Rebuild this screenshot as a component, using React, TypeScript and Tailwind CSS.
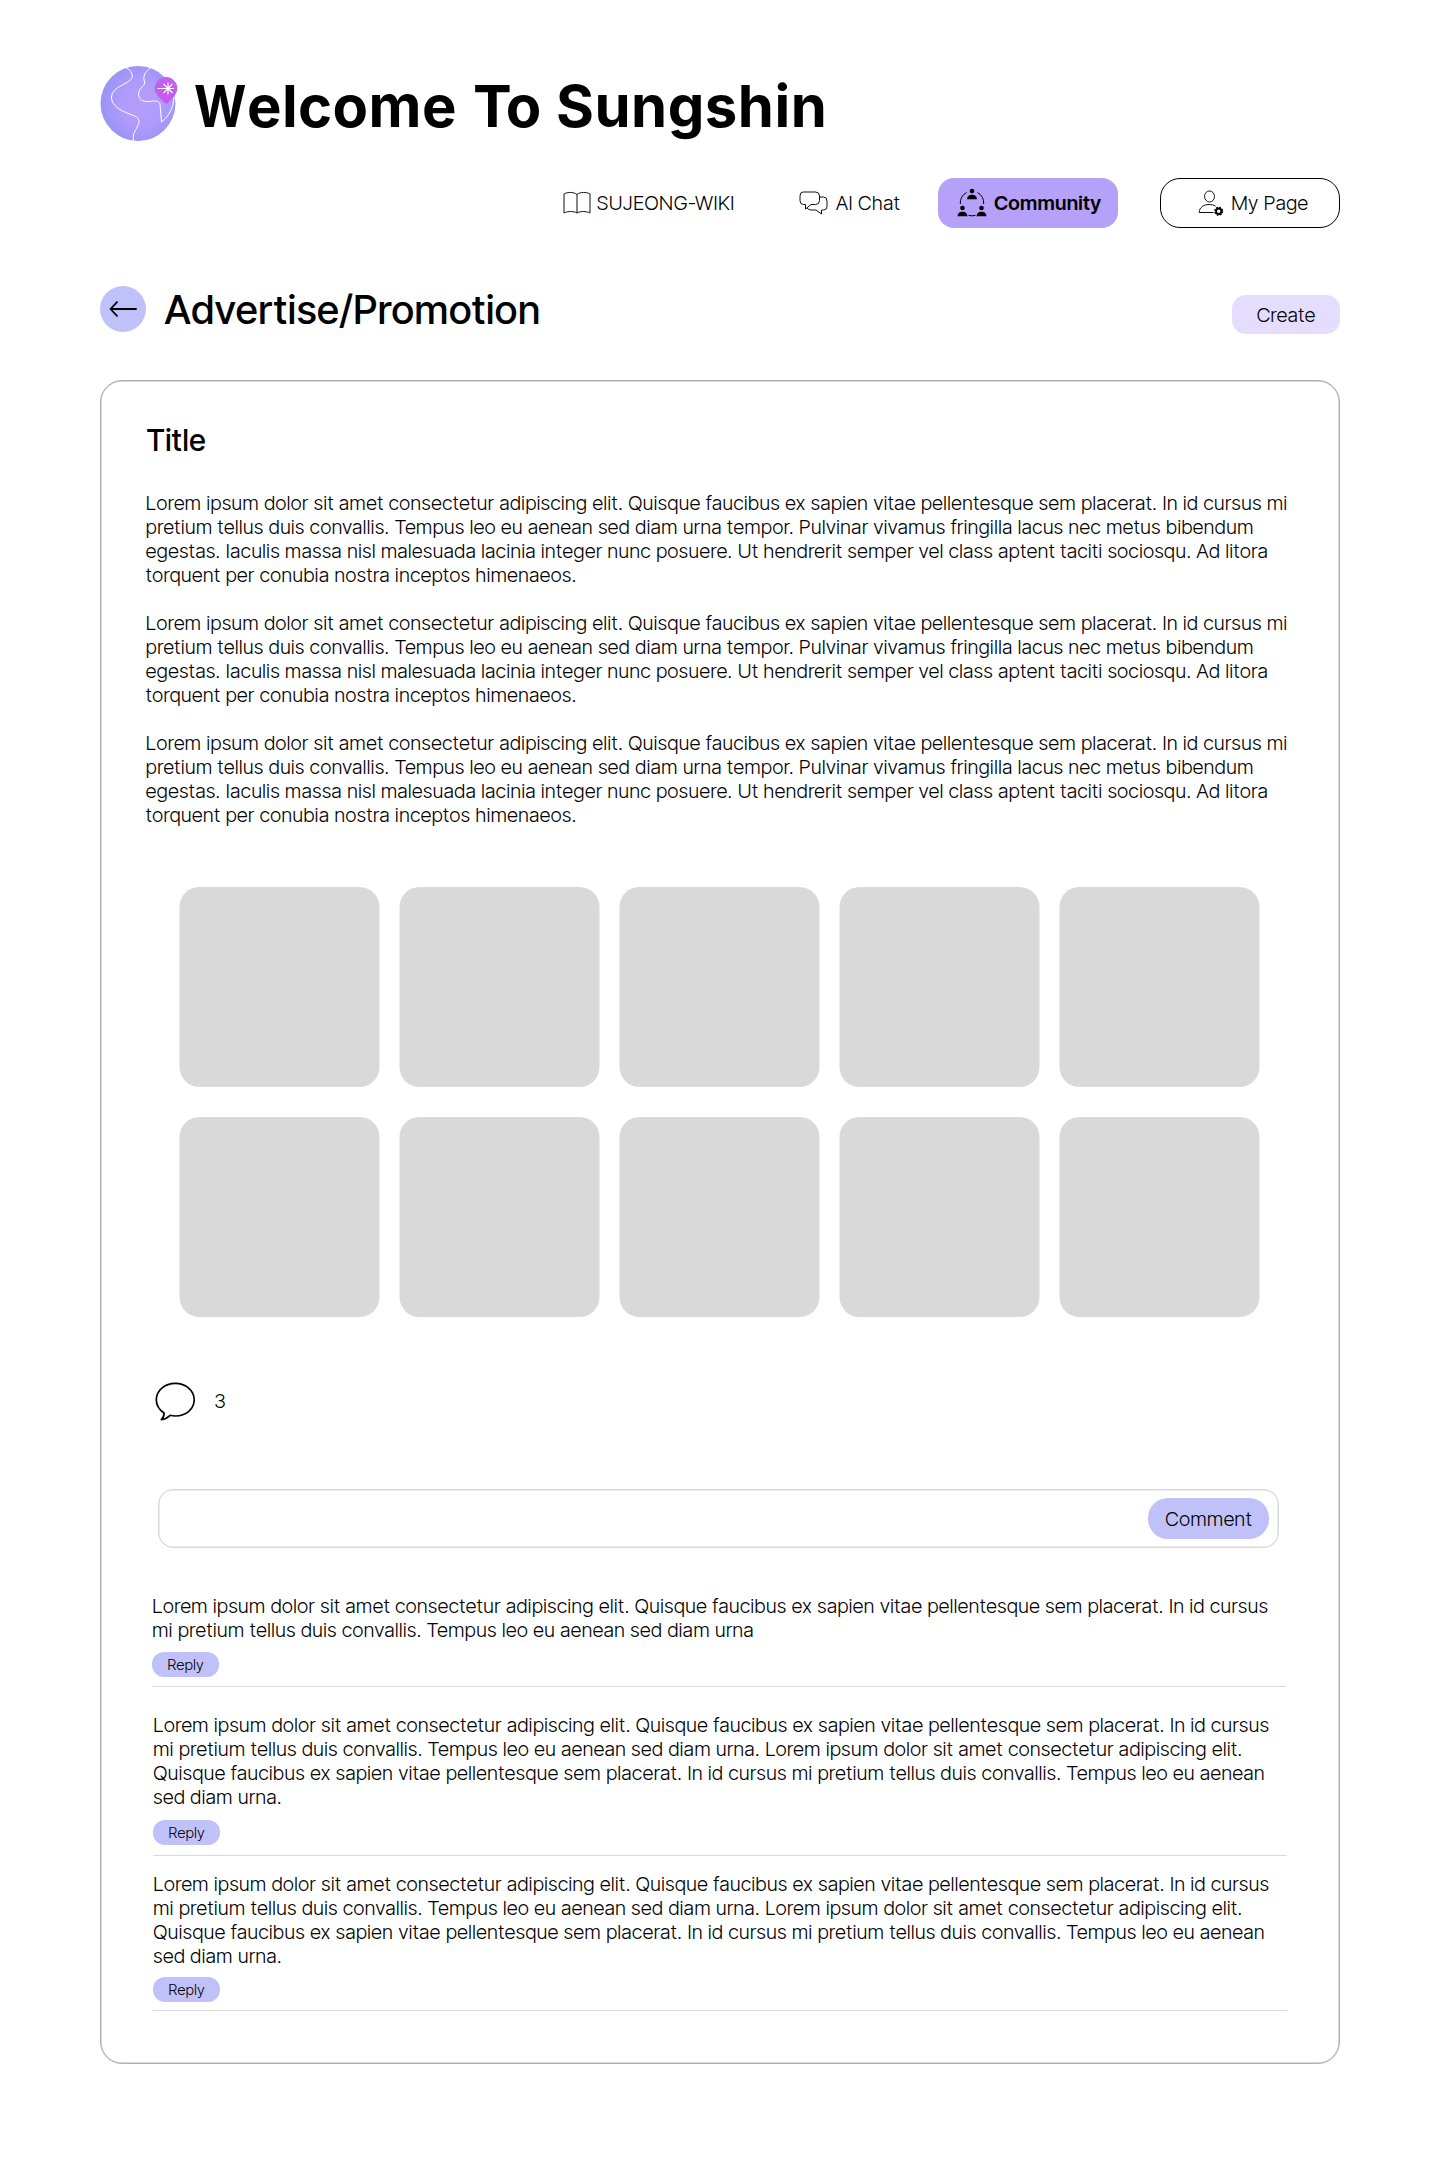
import React from "react";

const LOREM =
  "Lorem ipsum dolor sit amet consectetur adipiscing elit. Quisque faucibus ex sapien vitae pellentesque sem placerat. In id cursus mi pretium tellus duis convallis. Tempus leo eu aenean sed diam urna tempor. Pulvinar vivamus fringilla lacus nec metus bibendum egestas. Iaculis massa nisl malesuada lacinia integer nunc posuere. Ut hendrerit semper vel class aptent taciti sociosqu. Ad litora torquent per conubia nostra inceptos himenaeos.";

const SHORT =
  "Lorem ipsum dolor sit amet consectetur adipiscing elit. Quisque faucibus ex sapien vitae pellentesque sem placerat. In id cursus mi pretium tellus duis convallis. Tempus leo eu aenean sed diam urna";

const LONG = `${SHORT}. ${SHORT}.`;

function Globe() {
  return (
    <svg width="78" height="76" viewBox="0 0 78 76" fill="none">
      <defs>
        <radialGradient id="globe" cx="0.55" cy="0.5" r="0.6">
          <stop offset="0" stopColor="#B69CFC" />
          <stop offset="0.5" stopColor="#AE9BFB" />
          <stop offset="1" stopColor="#9791F6" />
        </radialGradient>
        <linearGradient id="pin" x1="0" y1="0" x2="0" y2="1">
          <stop offset="0" stopColor="#BE64EE" />
          <stop offset="1" stopColor="#CB55F0" />
        </linearGradient>
      </defs>
      <circle cx="38" cy="37.5" r="37.5" fill="url(#globe)" />
      <g stroke="#fff" strokeWidth="1" strokeLinecap="round">
        <path d="M26.500 2C31.500 4 34 10 31 13.500C26 19 12 21 11.500 31C11 41 24 46 33.500 49.500C43 53.500 38 59 34.500 66C33 69 33 72 33.500 75" />
        <path d="M50 2.500C45 5 42.500 11 44.500 15.500C46 20 39 21 38.500 28C38.500 33 43 36 48 35.500C53 35 59 34 60 38C60.500 44 61 50 61.500 56C69 50 73.500 42 74 31" />
      </g>
      <path d="M66.500 38.500L57.500 29.800A11.300 11.300 0 1 1 74.500 29.800Z" fill="url(#pin)" />
      <path d="M57.500 22.500H74M68 16.500V28.500M63.500 18L72.500 27M72.500 18L63.500 27" stroke="#fff" strokeWidth="1.100" />
    </svg>
  );
}

function BookIcon() {
  return (
    <svg width="28" height="24" viewBox="0 0 28 24" fill="none" stroke="#111" strokeWidth="1">
      <path d="M14 3.500C10.500.8 4.800.8 1 3V22C5 20 10.500 20 14 22C17.500 20 23 20 27 22V3C23.200.8 17.500.8 14 3.500ZM14 3.500V22" strokeLinejoin="round" />
    </svg>
  );
}

function ChatIcon() {
  return (
    <svg width="29" height="24" viewBox="0 0 29 24" fill="none" stroke="#111" strokeWidth="1" strokeLinejoin="round">
      <path d="M4 1H16.500Q20.500 1 20.500 5V9.500Q20.500 13.500 16.500 13.500H12L6.500 18V13.500H4.500Q1 13.500 1 9.500V5Q1 1 4 1Z" />
      <path d="M20.500 6H24.500Q28 6 28 10V15.500Q28 19 24.500 19H22.500V23L17 19H12.500Q9.500 19 8 17" />
    </svg>
  );
}

function Person({ x, y }: { x: number; y: number }) {
  return (
    <g transform={`translate(${x} ${y})`}>
      <circle cx="0" cy="0" r="2.300" />
      <path d="M-5 8.300C-4.800 5 -2.600 3.700 0 3.700S4.800 5 5 8.300Z" />
    </g>
  );
}

function CommunityIcon() {
  return (
    <svg width="30" height="30" viewBox="0 0 30 30" fill="#000">
      <Person x={15} y={3} />
      <Person x={5.5} y={20} />
      <Person x={24.5} y={20} />
      <path d="M9.500 4.500A12.500 12.500 0 0 0 3.300 16M20.500 4.500A12.500 12.500 0 0 1 26.700 16M11.500 27.300Q15 28.500 18.500 27.300" fill="none" stroke="#000" strokeWidth="1" />
    </svg>
  );
}

function UserGearIcon() {
  return (
    <svg width="26" height="26" viewBox="0 0 26 26" fill="none" stroke="#111" strokeWidth="1">
      <ellipse cx="11.500" cy="6.500" rx="5" ry="5.500" />
      <path d="M15.500 22.500H1.200C1.200 17.500 5.500 14.500 11 14.500C13.500 14.500 15.800 15 17.600 16.200" />
      <circle cx="20.700" cy="21.200" r="2.700" stroke="#000" strokeWidth="2" />
      <circle cx="20.700" cy="21.200" r="3.900" stroke="#000" strokeWidth="1.300" strokeDasharray="1.800 1.263" />
    </svg>
  );
}

function BubbleIcon() {
  return (
    <svg width="42" height="42" viewBox="0 0 42 42" fill="none" stroke="#000" strokeWidth="1.700" strokeLinejoin="round">
      <path d="M9 32C4.500 29 1.300 24.500 1.300 18.800C1.300 9.500 9.800 2.300 20.300 2.300S39.200 9.500 39.200 18.800S31 35 20.500 35C18.500 35 16.800 34.800 15.300 34.300C12.500 36.800 9.500 38.300 6.300 38.600C8.300 36.800 9.200 34.500 9 32Z" />
    </svg>
  );
}

function Reply({ className }: { className: string }) {
  return (
    <button className={`${className} flex h-[25px] w-[67px] items-center justify-center rounded-[12px] bg-[#c1c1fa] text-[15px] leading-[18px]`}>
      Reply
    </button>
  );
}

export default function App() {
  return (
    <div className="h-[2170px] w-[1440px] overflow-hidden bg-white px-[100px] pt-[66px] font-['Inter_Tight','Inter',sans-serif] text-[20px] leading-[24px] font-light tracking-[0.048px] text-black">
      <header>
        <div className="flex h-[78px] items-start">
          <Globe />
          <h1 className="mt-px ml-[16px] flex h-[78px] items-center font-['Inter',sans-serif] text-[58px] leading-[78px] font-bold tracking-[0.4px] whitespace-nowrap">
            <span className="inline-block w-[53px] origin-left scale-x-[0.87]">W</span>
            <span className="w-[226px]">elcome</span>
            <span className="w-[83px] tracking-[-1.5px]">To</span>
            <span className="tracking-[0.5px]">Sungshin</span>
          </h1>
        </div>
        <nav className="mt-[34px] flex h-[50px] items-center justify-end">
          <a className="mr-[64px] flex items-center gap-[5px] whitespace-nowrap"><BookIcon />SUJEONG-WIKI</a>
          <a className="mr-[38px] flex items-center gap-[8px] whitespace-nowrap"><ChatIcon />AI Chat</a>
          <a className="mr-[42px] flex h-[50px] w-[180px] items-center gap-[7px] rounded-[16px] bg-[#b5a1fa] pl-[19px] font-semibold tracking-[0.24px]"><CommunityIcon />Community</a>
          <a className="flex h-[50px] w-[180px] items-center gap-[7px] rounded-[20px] border border-black pl-[37px]"><UserGearIcon />My Page</a>
        </nav>
      </header>

      <div className="mt-[58px] flex h-[48px] items-start">
        <button className="flex size-[46px] items-center justify-center rounded-full bg-[#c1c1fa]">
          <svg width="28" height="16" viewBox="0 0 28 16" fill="none" stroke="#000" strokeWidth="1.800" strokeLinecap="round" strokeLinejoin="round">
            <path d="M27 8H1.500M8 1.200L1.500 8L8 14.800" />
          </svg>
        </button>
        <h2 className="ml-[18.5px] text-[40px] leading-[48px] font-medium tracking-[0.7px]">Advertise/Promotion</h2>
        <button className="mt-[9px] ml-auto flex h-[39px] w-[108px] items-center justify-center rounded-[14px] bg-[#e4ddfd]">Create</button>
      </div>

      <main className="mt-[46px] flex h-[1684px] flex-col rounded-[22px] border border-[#aeaeae] pt-[41px] pl-[44px] shadow-[inset_0_0_0_0.5px_#b4b4b4]">
        <h3 className="ml-[1.5px] text-[30px] leading-[36px] font-medium tracking-[0.45px]">Title</h3>
        <div className="mt-[33px] ml-[0.5px] flex w-[1150px] flex-col gap-[24px]">
          <p>{LOREM}</p>
          <p>{LOREM}</p>
          <p>{LOREM}</p>
        </div>

        <div className="mt-[60px] ml-[35px] grid w-[1080px] -translate-x-[0.5px] grid-cols-5 gap-x-[20px] gap-y-[30px]">
          {Array.from({ length: 10 }, (_, i) => (
            <div key={i} className="h-[200px] rounded-[20px] bg-[#d9d9d9]" />
          ))}
        </div>

        <div className="mt-[64px] ml-[10px] flex h-[42px] items-center gap-[17px]">
          <BubbleIcon />
          <span className="-mt-[2px]">3</span>
        </div>

        <div className="mt-[66px] ml-[13px] flex h-[59px] w-[1121px] items-center justify-end rounded-[15px] border border-[#d9d9d9] pr-[9px] shadow-[inset_0_0_0_0.5px_#d9d9d9]">
          <button className="flex h-[41px] w-[121px] items-center justify-center rounded-[20px] bg-[#c1c1fa]">Comment</button>
        </div>

        <div className="mt-[46px] ml-[7px] w-[1134px] border-b border-[#d9d9d9]">
          <p className="w-[1130px]">{SHORT}</p>
          <Reply className="mt-[10px] mb-[9px]" />
        </div>
        <div className="mt-[26px] ml-[8px] w-[1134px] border-b border-[#d9d9d9]">
          <p className="w-[1130px]">{LONG}</p>
          <Reply className="mt-[11px] mb-[10px]" />
        </div>
        <div className="mt-[16px] ml-[8px] w-[1134px] border-b border-[#d9d9d9]">
          <p className="w-[1130px]">{LONG}</p>
          <Reply className="mt-[9px] mb-[8px]" />
        </div>
      </main>
    </div>
  );
}
